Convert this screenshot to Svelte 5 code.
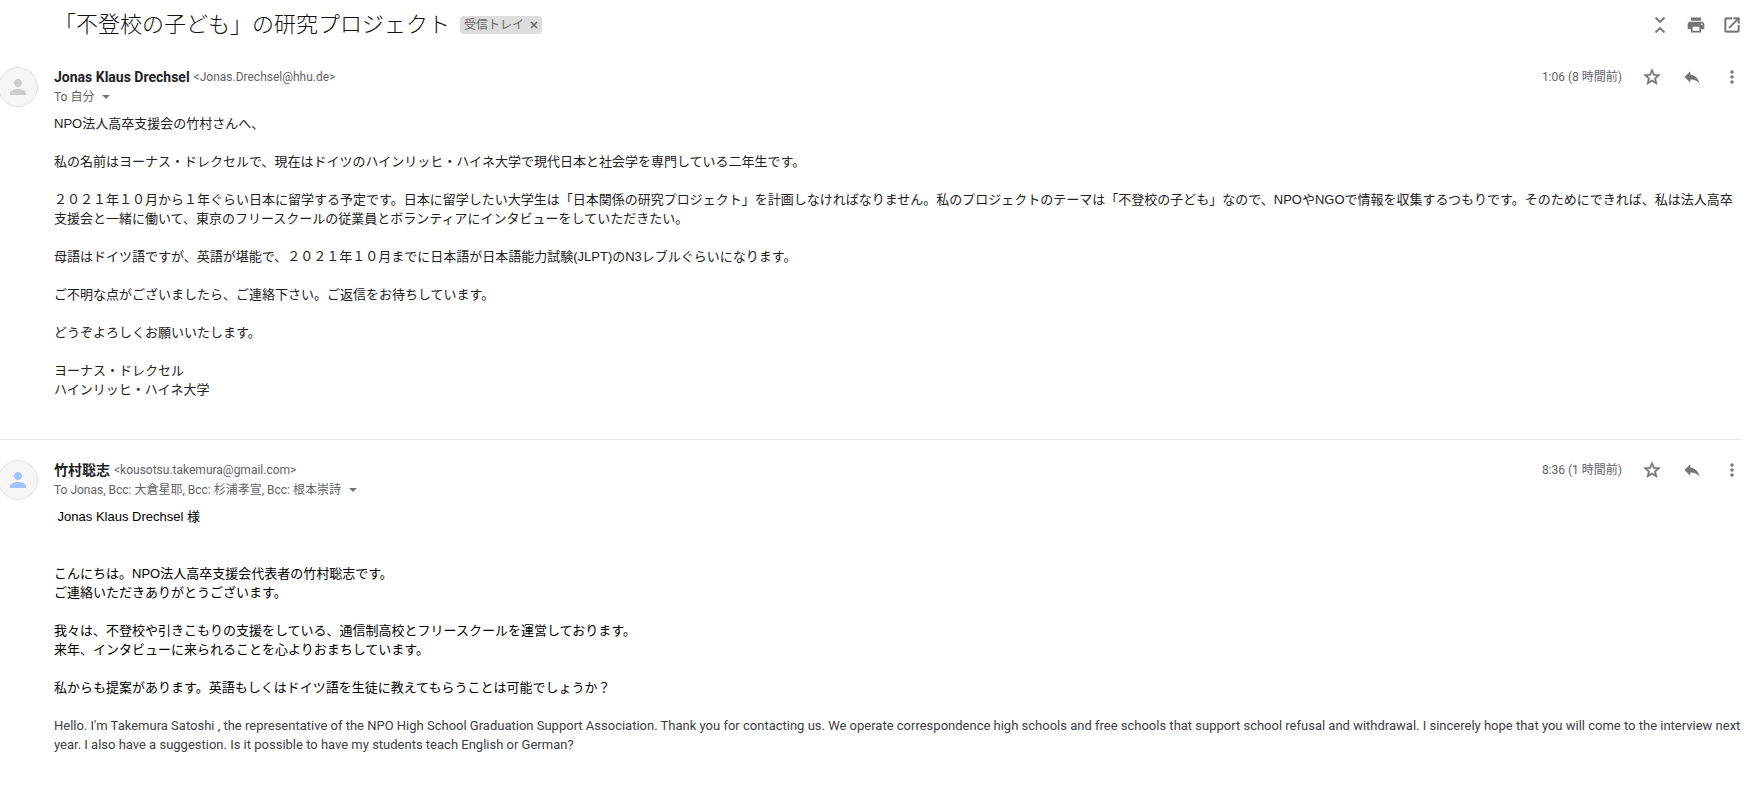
<script lang="ts">
type Message = {
  name: string;
  email: string;
  to: string;
  time: string;
  tone: string;
  paragraphs: { lines: string[]; kind?: string }[];
};

const subject = '「不登校の子ども」の研究プロジェクト';

const messages: Message[] = [
  {
    name: 'Jonas Klaus Drechsel',
    email: 'Jonas.Drechsel@hhu.de',
    to: 'To 自分',
    time: '1:06 (8 時間前)',
    tone: 'grey',
    paragraphs: [
      { lines: ['NPO法人高卒支援会の竹村さんへ、'] },
      { lines: ['私の名前はヨーナス・ドレクセルで、現在はドイツのハインリッヒ・ハイネ大学で現代日本と社会学を専門している二年生です。'] },
      { lines: ['２０２１年１０月から１年ぐらい日本に留学する予定です。日本に留学したい大学生は「日本関係の研究プロジェクト」を計画しなければなりません。私のプロジェクトのテーマは「不登校の子ども」なので、NPOやNGOで情報を収集するつもりです。そのためにできれば、私は法人高卒支援会と一緒に働いて、東京のフリースクールの従業員とボランティアにインタビューをしていただきたい。'] },
      { lines: ['母語はドイツ語ですが、英語が堪能で、２０２１年１０月までに日本語が日本語能力試験(JLPT)のN3レブルぐらいになります。'] },
      { lines: ['ご不明な点がございましたら、ご連絡下さい。ご返信をお待ちしています。'] },
      { lines: ['どうぞよろしくお願いいたします。'] },
      { lines: ['ヨーナス・ドレクセル', 'ハインリッヒ・ハイネ大学'] },
    ],
  },
  {
    name: '竹村聡志',
    email: 'kousotsu.takemura@gmail.com',
    to: 'To Jonas, Bcc: 大倉星耶, Bcc: 杉浦孝宣, Bcc: 根本崇詩',
    time: '8:36 (1 時間前)',
    tone: 'blue',
    paragraphs: [
      { lines: ['\u00a0Jonas Klaus Drechsel 様', '\u00a0'] },
      { lines: ['こんにちは。NPO法人高卒支援会代表者の竹村聡志です。', 'ご連絡いただきありがとうございます。'] },
      { lines: ['我々は、不登校や引きこもりの支援をしている、通信制高校とフリースクールを運営しております。', '来年、インタビューに来られることを心よりおまちしています。'] },
      { lines: ['私からも提案があります。英語もしくはドイツ語を生徒に教えてもらうことは可能でしょうか？'] },
      {
        lines: ["Hello. I'm Takemura Satoshi , the representative of the NPO High School Graduation Support Association. Thank you for contacting us. We operate correspondence high schools and free schools that support school refusal and withdrawal. I sincerely hope that you will come to the interview next year. I also have a suggestion. Is it possible to have my students teach English or German?"],
        kind: 'translation',
      },
    ],
  },
];
</script>

<main>
  <header class="subject">
    <h1>{subject}</h1>
    <span class="label">
      受信トレイ
      <button aria-label="ラベルを削除">
        <svg width="8" height="8" viewBox="0 0 8 8"><path d="M1 1l6 6M7 1L1 7" stroke="#666" stroke-width="1.5" /></svg>
      </button>
    </span>
    <div class="tools">
      <button aria-label="すべて折りたたむ">
        <svg width="20" height="20" viewBox="0 0 20 20"><path d="M5.5 2.5L10 7l4.5-4.5M5.5 17.5L10 13l4.5 4.5" fill="none" stroke="#757575" stroke-width="1.8" /></svg>
      </button>
      <button aria-label="すべて印刷">
        <svg width="20" height="20" viewBox="0 0 24 24"><path d="M19 8H5c-1.66 0-3 1.34-3 3v6h4v4h12v-4h4v-6c0-1.66-1.34-3-3-3zm-3 11H8v-5h8v5zm3-7c-.55 0-1-.45-1-1s.45-1 1-1 1 .45 1 1-.45 1-1 1zm-1-9H6v4h12V3z" /></svg>
      </button>
      <button aria-label="新しいウィンドウで開く">
        <svg width="20" height="20" viewBox="0 0 24 24"><path d="M19 19H5V5h7V3H5c-1.11 0-2 .9-2 2v14c0 1.1.89 2 2 2h14c1.1 0 2-.9 2-2v-7h-2v7zM14 3v2h3.59l-9.83 9.83 1.41 1.41L19 6.41V10h2V3h-7z" stroke="#757575" stroke-width="0.4" /></svg>
      </button>
    </div>
  </header>

  {#each messages as message}
    <article>
      <div class="avatar {message.tone}">
        <svg width="24" height="24" viewBox="0 0 24 24"><path d="M12 12c2.21 0 4-1.79 4-4s-1.79-4-4-4-4 1.79-4 4 1.79 4 4 4zm0 2c-2.67 0-8 1.34-8 4v2h16v-2c0-2.66-5.33-4-8-4z" /></svg>
      </div>
      <div class="content">
        <div class="head">
          <div class="people">
            <div class="from"><strong>{message.name}</strong> <span>&lt;{message.email}&gt;</span></div>
            <div class="to">
              {message.to}
              <button aria-label="詳細を表示">
                <svg width="8" height="4" viewBox="0 0 8 4"><path d="M0 0h8L4 4z" /></svg>
              </button>
            </div>
          </div>
          <time>{message.time}</time>
          <div class="actions">
            <button aria-label="スター">
              <svg width="20" height="20" viewBox="0 0 24 24"><path d="M22 9.24l-7.19-.62L12 2 9.19 8.63 2 9.24l5.46 4.73L5.82 21 12 17.27 18.18 21l-1.63-7.03L22 9.24zM12 15.4l-3.76 2.27 1-4.28-3.32-2.88 4.38-.38L12 6.1l1.71 4.04 4.38.38-3.32 2.88 1 4.28L12 15.4z" stroke="#757575" stroke-width="0.6" /></svg>
            </button>
            <button aria-label="返信">
              <svg width="20" height="20" viewBox="0 0 24 24"><path d="M10 9V5l-7 7 7 7v-4.1c5 0 8.5 1.6 11 5.1-1-5-4-10-11-11z" /></svg>
            </button>
            <button aria-label="その他">
              <svg width="20" height="20" viewBox="0 0 24 24"><path d="M12 8c1.1 0 2-.9 2-2s-.9-2-2-2-2 .9-2 2 .9 2 2 2zm0 2c-1.1 0-2 .9-2 2s.9 2 2 2 2-.9 2-2-.9-2-2-2zm0 6c-1.1 0-2 .9-2 2s.9 2 2 2 2-.9 2-2-.9-2-2-2z" /></svg>
            </button>
          </div>
        </div>
        <div class="body {message.tone}">
          {#each message.paragraphs as paragraph}
            <p class={paragraph.kind}>
              {#each paragraph.lines as line, i}{#if i}<br />{/if}{line}{/each}
            </p>
          {/each}
        </div>
      </div>
    </article>
  {/each}
</main>

<style>
:global(body) {
  margin: 0;
  background: #fff;
}

main {
  padding: 8px 18px 0 0;
  color: #222;
  font-family: Roboto, 'Noto Sans CJK JP', sans-serif;
}

button {
  display: flex;
  align-items: center;
  justify-content: center;
  padding: 0;
  background: none;
  border: 0;
  cursor: pointer;
}

svg {
  display: block;
  fill: #757575;
}

.subject {
  display: flex;
  align-items: center;
  height: 34px;
  padding-left: 54px;
}

h1 {
  margin: 0 10px 0 0;
  font-size: 22px;
  font-weight: 300;
  line-height: 32px;
  color: #111;
}

.label {
  display: flex;
  align-items: center;
  gap: 6px;
  height: 18px;
  padding: 0 4px;
  font-size: 12px;
  line-height: 18px;
  color: #666;
  background: #ddd;
  border-radius: 4px;
}

.tools {
  display: flex;
  gap: 16px;
  margin-left: auto;
}

article {
  display: flex;
  padding: 25px 0 40px;
}

article + article {
  padding-top: 20px;
  border-top: 1px solid #e8eaed;
}

.avatar {
  display: flex;
  flex: none;
  align-items: center;
  justify-content: center;
  box-sizing: border-box;
  width: 40px;
  height: 40px;
  margin: 0 16px 0 -2px;
  background: #f5f5f5;
  border: 1px solid #e0e0e0;
  border-radius: 50%;
}

.avatar svg {
  fill: #ccc;
}

.avatar.blue {
  border-color: #dfe3ee;
}

.avatar.blue svg {
  fill: #a1c2fa;
}

.content {
  flex: 1;
  min-width: 0;
}

.head {
  display: flex;
  align-items: flex-start;
}

.people {
  flex: 1;
  font-size: 12px;
  line-height: 20px;
  color: #5f6368;
}

.from,
.to {
  display: flex;
  gap: 4px;
  align-items: center;
  height: 20px;
}

.to {
  gap: 8px;
}

strong {
  font-size: 14px;
  font-weight: 700;
  color: #202124;
}

time {
  font-size: 12px;
  line-height: 20px;
  color: #5f6368;
}

.actions {
  display: flex;
  gap: 20px;
  margin-left: 20px;
}

.body {
  padding-top: 7px;
  font-family: 'Liberation Sans', 'Noto Sans CJK JP', sans-serif;
  font-size: 13px;
  line-height: 19px;
}

.body.blue {
  color: #000;
}

p {
  margin: 0 0 19px;
}

p:last-child {
  margin: 0;
}

.body .translation {
  font-family: Roboto, sans-serif;
  color: #3c4043;
}
</style>
